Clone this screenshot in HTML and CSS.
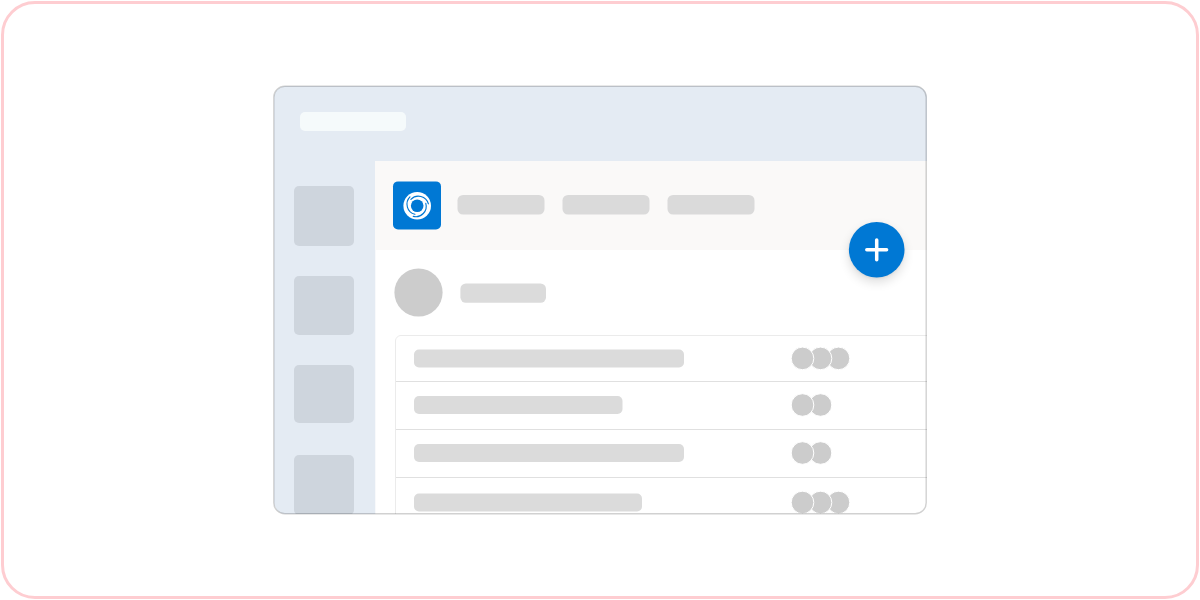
FILE: index.html
```
<!DOCTYPE html>
<html lang="en">
<head>
<meta charset="utf-8">
<title>App layout</title>
<link rel="stylesheet" href="styles.css">
</head>
<body>
<main class="card">
  <section class="window">
    <header class="titlebar"><span class="search"></span></header>
    <div class="body">
      <nav class="rail"><i class="tile first"></i><i class="tile"></i><i class="tile"></i><i class="tile last"></i></nav>
      <div class="page">
        <div class="toolbar">
          <svg class="logo" viewBox="0 0 48 48">
            <rect y=".4" width="48" height="48" rx="5" fill="#0078d4"/>
            <circle cx="24.2" cy="24.7" r="13.8" fill="#fff"/>
            <circle cx="24.2" cy="24.7" r="6.3" fill="#0078d4"/>
            <g fill="none" stroke="#0078d4" stroke-width="1.15" stroke-linecap="round">
              <path d="M17.9 18.4A10.4 10.4 0 0 1 35.4 22.8"/>
              <path d="M17.9 18.4A10.4 10.4 0 0 1 35.4 22.8" transform="rotate(120 24.2 24.7)"/>
              <path d="M17.9 18.4A10.4 10.4 0 0 1 35.4 22.8" transform="rotate(240 24.2 24.7)"/>
            </g>
          </svg>
          <svg class="tabs" viewBox="0 0 298 20"><rect x=".5" width="87" height="19.5" rx="5.5"/><rect x="105.5" width="87" height="19.5" rx="5.5"/><rect x="210.5" width="87" height="19.5" rx="5.5"/></svg>
        </div>
        <div class="profile"><svg class="avatar" viewBox="0 0 49 49"><circle cx="24.5" cy="24.5" r="24.1"/></svg><svg class="name" viewBox="0 0 87 20"><rect x=".4" y=".4" width="85.6" height="19.4" rx="5.5"/></svg></div>
        <div class="table">
          <div class="row r1"><svg class="bar" viewBox="0 0 376 18"><rect y=".5" width="270" height="18" rx="5"/></svg><svg class="people" viewBox="0 0 60 24"><circle cx="48.5" cy="12.4" r="11.3"/><circle cx="30.5" cy="12.4" r="11.3"/><circle cx="12.5" cy="12.4" r="11.3"/></svg></div>
          <div class="row r2"><svg class="bar" viewBox="0 0 376 18"><rect width="208.5" height="18" rx="5"/></svg><svg class="people" viewBox="0 0 60 24"><circle cx="30.5" cy="12" r="11.3"/><circle cx="12.5" cy="12" r="11.3"/></svg></div>
          <div class="row r3"><svg class="bar" viewBox="0 0 376 18"><rect width="270" height="18" rx="5"/></svg><svg class="people" viewBox="0 0 60 24"><circle cx="30.5" cy="12" r="11.3"/><circle cx="12.5" cy="12" r="11.3"/></svg></div>
          <div class="row r4"><svg class="bar" viewBox="0 0 376 18"><rect y=".5" width="228" height="18" rx="5"/></svg><svg class="people" viewBox="0 0 60 24"><circle cx="48.5" cy="12.5" r="11.3"/><circle cx="30.5" cy="12.5" r="11.3"/><circle cx="12.5" cy="12.5" r="11.3"/></svg></div>
        </div>
      </div>
    </div>
    <svg class="outline" viewBox="0 0 654 430"><rect x="0.8" y="1.2" width="652.4" height="427.6" rx="11"/></svg>
    <div class="fab"><svg viewBox="0 0 56 56"><circle cx="27.7" cy="27.7" r="27.8"/><path d="M27.7 17.9v19.8M17.8 27.8h19.8"/></svg></div>
  </section>
</main>
</body>
</html>
```
FILE: styles.css
```
* { box-sizing: border-box; }
body { margin: 0; background: #fff; }
i, svg { display: block; flex: none; }
.card { width: 1198px; height: 598px; margin: 1px; border: 3px solid #fecdd1; border-radius: 34px; display: flex; padding: 81px 0 0 269px; }
.window { position: relative; width: 654px; height: 430px; }
.titlebar { width: 652.5px; height: 74.5px; margin: 1px 0 0 1px; padding: 26px; background: #e4ebf3; border-radius: 12px 12px 0 0; }
.search { display: block; width: 106px; height: 18.5px; border-radius: 5px; background: #f5fafb; }
.body { display: flex; height: 353.5px; width: 652.5px; margin-left: 1px; overflow: hidden; border-radius: 0 0 12px 12px; }
.rail { width: 101px; flex: none; background: #e4ebf3; padding: 25.5px 0 0 20px; display: flex; flex-direction: column; gap: 30px; }
.tile { width: 60px; height: 58.5px; border-radius: 5px; background: #ced5dd; }
.tile.first { height: 60px; }
.tile.last { height: 60px; margin-top: 1.5px; }
.page { flex: 1; min-width: 0; background: #fff; box-shadow: inset 1px 0 #f8f9fb; }
.toolbar { height: 89.5px; background: #faf9f8; display: flex; padding: 20.5px 0 0 18px; }
.logo { width: 48px; height: 48px; margin-right: 16px; overflow: visible; }
.tabs { width: 298px; height: 20px; margin-top: 14px; fill: #dadada; }
.profile { height: 85px; display: flex; gap: 17px; padding: 18px 0 0 19px; }
.avatar { width: 49px; height: 49px; fill: #ccc; }
.name { width: 87px; height: 20px; fill: #dbdbdb; margin-top: 15px; }
.table { margin-left: 20px; width: 540px; height: 190px; border: 1px solid #ebebeb; border-radius: 6px 0 0 0; }
.row { display: flex; align-items: flex-start; border-bottom: 1px solid #e0e0e0; padding-left: 18px; }
.r1 { height: 46px; padding-top: 13px; }
.r2, .r3 { height: 48px; padding-top: 14px; }
.r4 { height: 48px; padding-top: 15px; border: 0; }
.bar { width: 376px; height: 18px; overflow: visible; fill: #dbdbdb; }
.people { width: 60px; height: 24px; margin-top: -3px; }
.people circle { fill: #ccc; stroke: #fff; stroke-width: 1; }
.outline { position: absolute; inset: 0; width: 654px; height: 430px; pointer-events: none; }
.outline rect { fill: none; stroke: #000; stroke-opacity: .18; stroke-width: 1.4; }
.fab { position: absolute; left: 576px; top: 137px; width: 55px; height: 55px; border-radius: 50%; box-shadow: 0 5px 11px rgba(0,0,0,.14), 0 1px 3px rgba(0,0,0,.08); }
.fab svg { width: 56px; height: 56px; overflow: visible; }
.fab circle { fill: #0078d4; }
.fab path { fill: none; stroke: #fff; stroke-width: 3.5; stroke-linecap: round; }
```
